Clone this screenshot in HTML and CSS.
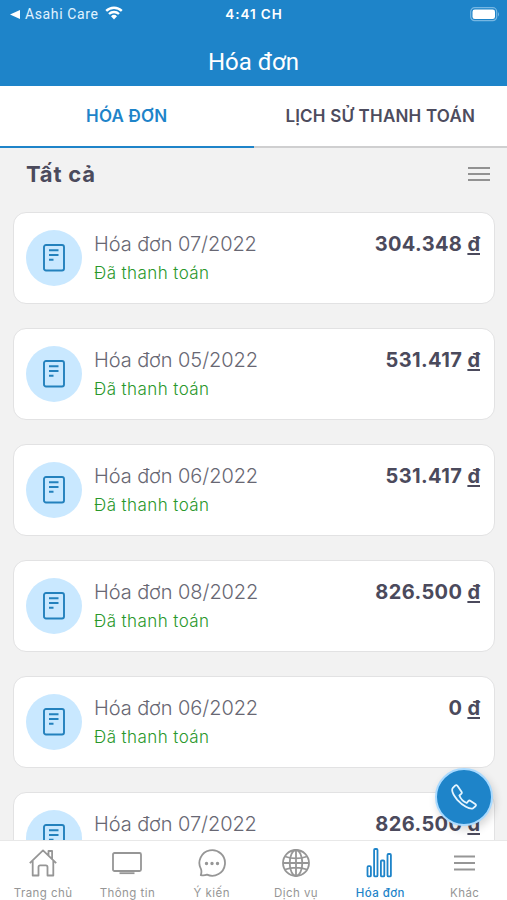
FILE: index.html
```html
<!DOCTYPE html>
<html lang="vi">
<head>
<meta charset="utf-8">
<title>Hóa đơn</title>
<link rel="stylesheet" href="styles.css">
</head>
<body>
<svg class="defs" width="0" height="0">
  <symbol id="bill" viewBox="0 0 22 28"><rect x="1" y="1" width="20" height="25.5" rx="2" stroke-width="1.9"/><path d="M6 6.3h9.5M6 11h9.5M6 15.8h4.5" stroke-width="2"/></symbol>
</svg>
<div class="app">
  <header class="header">
    <div class="status">
      <div class="status-left">
        <svg class="back" viewBox="0 0 10 9"><path d="M0 4.5 10 0v9z"/></svg>
        <span class="carrier">Asahi Care</span>
        <svg class="wifi" viewBox="0 0 18 14"><path d="M1.2 4.9a11.2 11.2 0 0 1 15.6 0M4 8a7.2 7.2 0 0 1 10 0" fill="none" stroke="#fff" stroke-width="2.4"/><path d="M6 10.2a4.3 4.3 0 0 1 6 0L9 13.6z" fill="#fff"/></svg>
      </div>
      <div class="clock">4:41 CH</div>
      <div class="status-right"><svg class="battery" viewBox="0 0 30 15"><rect x=".7" y=".7" width="26" height="13" rx="4" fill="none" stroke="#76b7e3" stroke-width="1.2"/><rect x="2.5" y="2.5" width="22.5" height="9.5" rx="2.3" fill="#fff"/><path d="M28 5v4.5q2-2.2 0-4.5" fill="#76b7e3"/></svg></div>
    </div>
    <h1 class="title">Hóa đơn</h1>
  </header>
  <div class="tabs">
    <div class="tab tab-active"><span class="tab-a">HÓA ĐƠN</span></div>
    <div class="tab"><span class="tab-b">LỊCH SỬ THANH TOÁN</span></div>
  </div>
  <main class="content">
    <div class="filter">
      <h2>Tất cả</h2>
      <svg class="menu" viewBox="0 0 22 16"><path d="M0 2h22M0 8h22M0 14h22"/></svg>
    </div>
    <div class="list">
      <div class="card"><div class="disc"><svg><use href="#bill"/></svg></div><div class="info"><div class="name">Hóa đơn 07/2022</div><div class="paid">Đã thanh toán</div></div><div class="amount">304.348 <u>đ</u></div></div>
      <div class="card"><div class="disc"><svg><use href="#bill"/></svg></div><div class="info"><div class="name">Hóa đơn 05/2022</div><div class="paid">Đã thanh toán</div></div><div class="amount">531.417 <u>đ</u></div></div>
      <div class="card"><div class="disc"><svg><use href="#bill"/></svg></div><div class="info"><div class="name">Hóa đơn 06/2022</div><div class="paid">Đã thanh toán</div></div><div class="amount">531.417 <u>đ</u></div></div>
      <div class="card"><div class="disc"><svg><use href="#bill"/></svg></div><div class="info"><div class="name">Hóa đơn 08/2022</div><div class="paid">Đã thanh toán</div></div><div class="amount">826.500 <u>đ</u></div></div>
      <div class="card"><div class="disc"><svg><use href="#bill"/></svg></div><div class="info"><div class="name">Hóa đơn 06/2022</div><div class="paid">Đã thanh toán</div></div><div class="amount">0 <u>đ</u></div></div>
      <div class="card"><div class="disc"><svg><use href="#bill"/></svg></div><div class="info"><div class="name">Hóa đơn 07/2022</div></div><div class="amount">826.500 <u>đ</u></div></div>
    </div>
  </main>
  <nav class="nav">
    <div class="item"><svg viewBox="0 0 30 30"><path d="M1.8 15.2 15 2.4l13.2 12.8M20.5 7.2V3h3.6v8M4.7 13v14.5h5.8V19q0-1.6 1.6-1.6h5.8q1.6 0 1.6 1.6v8.5h5.8V13"/></svg><span>Trang chủ</span></div>
    <div class="item"><svg viewBox="0 0 30 30"><rect x="1" y="5" width="28" height="18" rx="1.5"/><path d="M7.5 25.2h15"/></svg><span>Thông tin</span></div>
    <div class="item"><svg viewBox="0 0 30 30"><path d="M3.8 27.1c.7-1.8.8-4 .2-6A12.8 12.8 0 1 1 10 26.6c-1.7.7-4 .9-6.2.5z"/><path class="dots" d="M9.5 15.5h.01M15 15.5h.01M20.5 15.5h.01"/></svg><span>Ý kiến</span></div>
    <div class="item"><svg viewBox="0 0 30 30"><circle cx="15" cy="15" r="13"/><ellipse cx="15" cy="15" rx="6.3" ry="13"/><path d="M15 2v26M2 15h26M4 8.5q11 3.8 22 0M4 21.5q11-3.8 22 0"/></svg><span>Dịch vụ</span></div>
    <div class="item item-active"><svg viewBox="0 0 30 30"><rect x="2.5" y="18.2" width="3.4" height="10.2" rx="1"/><rect x="9.1" y="1" width="3.4" height="27.4" rx="1"/><rect x="15.9" y="12.5" width="3.4" height="15.9" rx="1"/><rect x="22.5" y="6" width="3.4" height="22.4" rx="1"/></svg><span>Hóa đơn</span></div>
    <div class="item"><svg viewBox="0 0 30 30"><path d="M4 8.5h21M4 15h21M4 21.5h21"/></svg><span>Khác</span></div>
  </nav>
  <div class="call"><svg viewBox="0 0 26 26"><path d="M4.1 1.6 1.9 3.8c-1.6 2-.4 6.2 4.4 12.1 5.5 6 12.2 9.5 15.6 8.5l2.5-2.2c.9-.8.7-1.5-.2-2.2l-4.6-3.1c-.9-.6-1.7-.4-2.3.3l-1.5 1.8c-2.7-1-6.2-4.4-7.4-7.5l1.8-1.6c.7-.6.8-1.3.3-2.1L6.6 2c-.7-1-1.5-1.3-2.5-.4z"/></svg></div>
</div>
</body>
</html>
```
FILE: styles.css
```css
* { box-sizing: border-box; }
body { margin: 0; font-family: Inter, "Liberation Sans", sans-serif; }
svg { display: block; fill: none; }
.defs { position: absolute; }
.app { position: relative; width: 507px; height: 900px; overflow: hidden; display: flex; flex-direction: column; background: #f2f2f2; }
.header { height: 86px; flex: none; background: #1e84c9; color: #fff; }
.status { height: 28px; display: grid; grid-template-columns: 1fr auto 1fr; align-items: center; padding: 0 9px 0 10px; font-size: 13px; line-height: 28px; }
.status-left { display: flex; align-items: center; }
.back { width: 10px; height: 9px; fill: #fff; margin-right: 5px; }
.carrier { font-family: Roboto, sans-serif; font-size: 14px; letter-spacing: .62px; color: #e1f3ff; }
.wifi { width: 18px; height: 14px; margin: -2px 0 0 6px; }
.clock { font-size: 13.5px; font-weight: 600; letter-spacing: .9px; }
.status-right { display: flex; justify-content: flex-end; }
.battery { width: 30px; height: 15px; margin-right: -2px; }
.title { margin: 18px 0 0; text-align: center; font: 400 24px/32px Roboto, sans-serif; letter-spacing: 0; }
.tabs { height: 62px; flex: none; display: flex; background: #fff; font-weight: 600; font-size: 17px; line-height: 60px; color: #4d4c5e; text-align: center; }
.tab { flex: 1; border-bottom: 2px solid #cfcfd0; white-space: nowrap; }
.tab-a, .tab-b { letter-spacing: .2px; }
.tab-active { color: #1e84c9; border-bottom-color: #1e84c9; }
.content { height: 692px; flex: none; overflow: hidden; }
.filter { height: 52px; display: flex; justify-content: space-between; align-items: center; padding: 0 17px 0 26px; color: #4b4a5c; }
.filter h2 { margin: 0; font-size: 22px; font-weight: 700; line-height: 52px; letter-spacing: .8px; }
.menu { width: 22px; height: 16px; stroke: #929292; stroke-width: 2; }
.list { display: flex; flex-direction: column; gap: 24px; padding: 12px 12px 0 13px; }
.card { height: 92px; flex: none; display: flex; align-items: flex-start; padding: 17px 13px 0 12px; background: #fff; border: 1.5px solid #e2e2e3; border-radius: 13px; }
.disc { width: 56px; height: 56px; border-radius: 50%; background: #c9e8ff; display: flex; align-items: center; justify-content: center; }
.disc svg { width: 22px; height: 28px; stroke: #2381bd; }
.info { flex: 1; margin-left: 12px; padding-top: 1px; white-space: nowrap; }
.name { font-size: 20px; font-weight: 300; line-height: 26px; letter-spacing: -.08px; color: #686773; }
.paid { font-size: 17px; font-weight: 300; line-height: 24px; margin-top: 4px; letter-spacing: .42px; color: #29972b; }
.amount { padding-top: 1px; margin-right: 1px; font-size: 20px; font-weight: 700; line-height: 26px; letter-spacing: .38px; color: #4b4a5c; }
.amount u { letter-spacing: 0; text-decoration-thickness: 1.5px; text-underline-offset: 2px; text-decoration-skip-ink: none; }
.nav { height: 60px; flex: none; display: grid; grid-template-columns: repeat(6, 84.3px); padding-left: 1px; background: #fff; border-top: 1px solid #e8e8e8; color: #969696; font-size: 11.5px; }
.item { display: flex; flex-direction: column; align-items: center; padding-top: 7px; white-space: nowrap; }
.item svg { width: 30px; height: 30px; stroke: currentColor; stroke-width: 1.8; stroke-linejoin: round; }
.item .dots { stroke-width: 3.4; stroke-linecap: round; }
.item span { line-height: 16px; margin-top: 7px; letter-spacing: .45px; }
.item-active { color: #1e84c9; font-weight: 500; }
.call { position: absolute; left: 435px; top: 768px; width: 58px; height: 58px; border: 2px solid #a9daff; border-radius: 50%; background: #1e84c9; display: flex; align-items: center; justify-content: center; box-shadow: 2px 4px 8px rgba(0, 0, 0, .16); }
.call svg { width: 26px; height: 26px; stroke: #e5f5ff; stroke-width: 1.8; stroke-linejoin: round; }
```
